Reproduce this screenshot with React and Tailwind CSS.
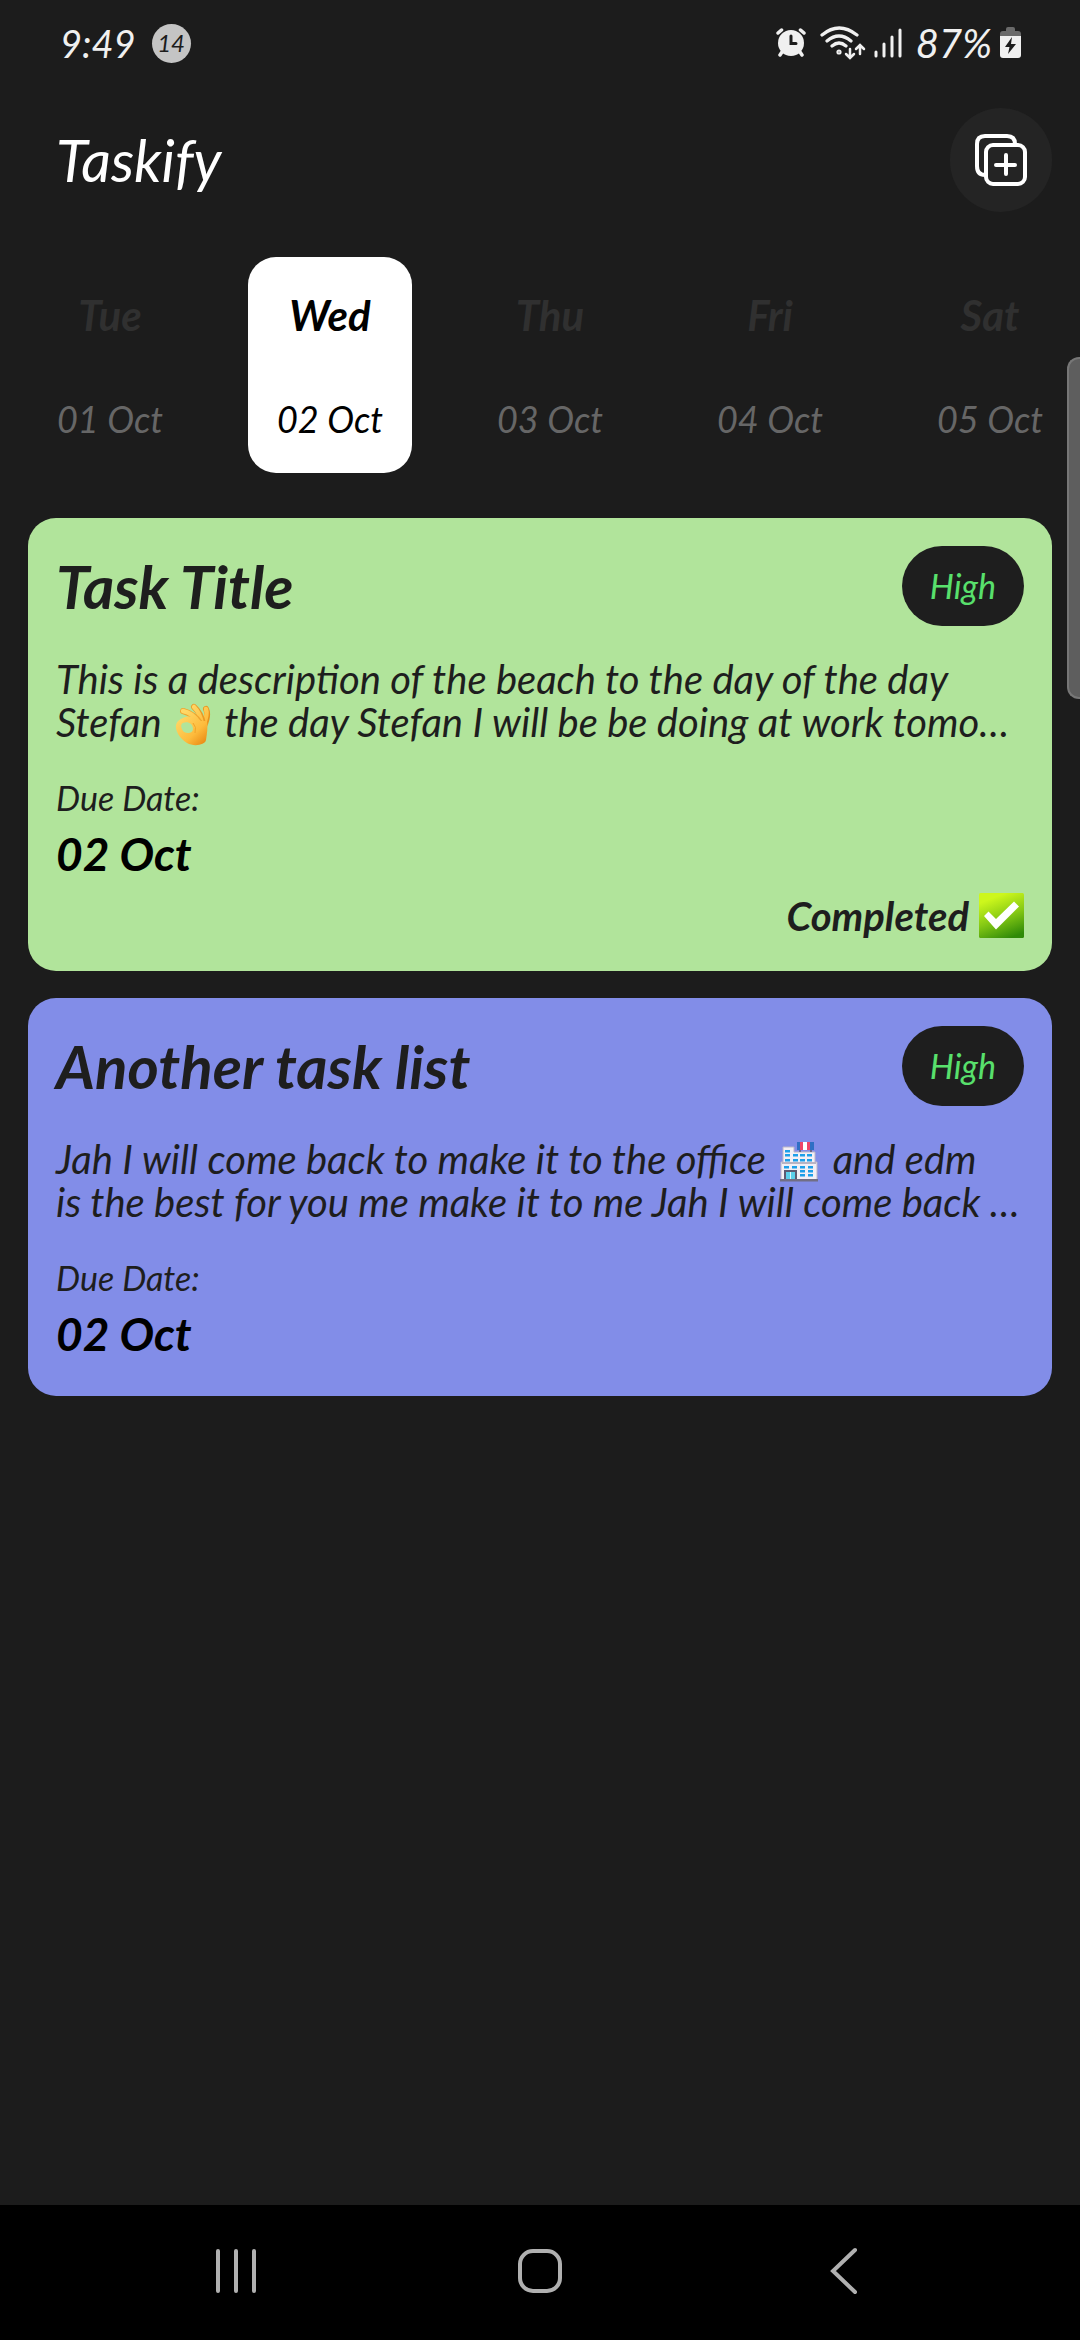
const DAYS = [
  { day: 'Tue', date: '01 Oct' },
  { day: 'Wed', date: '02 Oct', active: true },
  { day: 'Thu', date: '03 Oct' },
  { day: 'Fri', date: '04 Oct' },
  { day: 'Sat', date: '05 Oct' },
];

function OkHand() {
  return (
    <svg role="img" aria-label="OK hand" viewBox="9 8 36 44" className="mx-1 inline-block h-[44px] w-[36px] align-[-10px]">
      <defs>
        <linearGradient id="skin" gradientUnits="userSpaceOnUse" x1="14" y1="16" x2="44" y2="48">
          <stop offset="0.1" stopColor="#ffd766" />
          <stop offset="0.6" stopColor="#fdbb3c" />
          <stop offset="1" stopColor="#e5800c" />
        </linearGradient>
      </defs>
      <g fill="none" strokeLinecap="round" strokeLinejoin="round">
        <path d="M40 14 Q43 20 38 31" stroke="#e8921c" strokeWidth="6" />
        <path d="M40 14 Q42 20 37 31" stroke="url(#skin)" strokeWidth="4.5" />
        <path d="M28 12 Q35 18 37 29" stroke="#e99a25" strokeWidth="6" />
        <path d="M28 12 Q34 18 36 29" stroke="url(#skin)" strokeWidth="4.500" />
        <path d="M17 16 Q28 19 34 28" stroke="#eea42e" strokeWidth="6" />
        <path d="M17 16 Q27 18 33 28" stroke="url(#skin)" strokeWidth="4.500" />
      </g>
      <path
        fill="url(#skin)"
        fillRule="evenodd"
        d="M17 23 C23 20 31 22 35 26 L41 26 C42 33 41 38 40 45 C39 50 28 52 21 48 C13 43 9 35 10 30 C11 26 14 24 17 23 Z M17 28 C14 29 15 34 18 37 C22 39 27 38 27 34 C27 29 22 26 17 28 Z"
      />
      <path d="M27 28 Q31 32 29 38" fill="none" stroke="#f0a32a" strokeWidth="1" />
    </svg>
  );
}

function OfficeBuilding() {
  const windows = [
    [13, 20], [13, 24], [13, 29],
    [21, 24], [21, 29], [28, 24], [28, 29], [35, 24], [35, 29],
    [12, 36], [20, 36], [28, 36], [36, 36],
    [28, 40], [36, 40], [28, 44], [36, 44],
  ];
  return (
    <svg role="img" aria-label="Office building" viewBox="7 11 40 42" className="mx-1 inline-block h-[42px] w-[40px] align-[-9px]">
      <path d="M11 17 H22 V22 H43 V32 H45 V50 H9 V32 H11 Z" fill="#f3eff5" stroke="#bcb7c8" strokeWidth="1" />
      <rect x="25" y="12" width="17" height="8" fill="#2f6fc4" />
      <rect x="28" y="12" width="3" height="8" fill="#ef4468" />
      <rect x="31" y="12" width="4" height="8" fill="#fff" />
      <rect x="35" y="12" width="3" height="8" fill="#ef4468" />
      <path d="M28 20 V22M39 20 V22" stroke="#5d5a70" strokeWidth="1.500" />
      <rect x="10" y="32" width="34" height="2" fill="#b9b4c4" />
      {windows.map(([x, y]) => (
        <rect key={`${x}-${y}`} x={x} y={y} width="5" height="2.500" fill="#1e9fe9" />
      ))}
      <rect x="12" y="40" width="13" height="10" fill="#5c5a72" />
      <rect x="14" y="42" width="9" height="8" fill="#5ccfea" />
      <path d="M18.500 42 V50" stroke="#fff" strokeWidth="0.800" />
      <rect x="8" y="49" width="38" height="2.500" fill="#716e84" />
    </svg>
  );
}

function CheckMark() {
  return (
    <svg role="img" aria-label="Done" viewBox="0 0 45 45" className="size-[45px]">
      <defs>
        <linearGradient id="tick" x1="0.3" y1="0" x2="0.7" y2="1">
          <stop offset="0.1" stopColor="#cdf71c" />
          <stop offset="0.55" stopColor="#84c814" />
          <stop offset="1" stopColor="#2f8a08" />
        </linearGradient>
      </defs>
      <rect width="45" height="45" rx="1.5" fill="url(#tick)" />
      <path d="M5 23 L9.500 18.500 L17 26 L35 8.500 L40 13.500 L17 36.500 Z" fill="#fff" />
    </svg>
  );
}

const TASKS = [
  {
    title: 'Task Title',
    priority: 'High',
    color: 'bg-[#b1e49b]',
    lines: [
      <>This is a description of the beach to the day of the day</>,
      <>Stefan <OkHand /> the day Stefan I will be be doing at work tomo…</>,
    ],
    due: '02 Oct',
    completed: true,
  },
  {
    title: 'Another task list',
    priority: 'High',
    color: 'bg-[#828de8]',
    lines: [
      <>Jah I will come back to make it to the office <OfficeBuilding /> and edm</>,
      <>is the best for you me make it to me Jah I will come back …</>,
    ],
    due: '02 Oct',
  },
];

function StatusBar() {
  return (
    <div className="flex h-[86px] items-center justify-between pr-[58px] pl-[60px] text-[#f0f0f0]">
      <div className="flex items-center gap-4">
        <span className="text-[38px] leading-none">9:49</span>
        <span className="flex size-[39px] items-center justify-center rounded-full bg-[#c4c4c4] text-2xl leading-none text-[#1c1c1c]">14</span>
      </div>
      <div className="flex items-center">
        <svg viewBox="0 0 30 30" className="mr-3.5 size-[30px]" aria-label="Alarm" role="img">
          <g stroke="currentColor" strokeWidth="3.500" strokeLinecap="round">
            <path d="M2 5 L5.500 2M28 5 L24.500 2M6 24 L4 27M24 24 L26 27" />
          </g>
          <circle cx="15" cy="15" r="13" fill="currentColor" />
          <path d="M15 8 V15.500 H20" fill="none" stroke="#1c1c1c" strokeWidth="3" strokeLinecap="round" />
        </svg>
        <svg viewBox="0 0 46 34" className="mr-2 h-[34px] w-[46px]" aria-label="Wi-Fi" role="img" fill="none" stroke="currentColor" strokeWidth="3.200" strokeLinecap="round">
          <path d="M2 9 Q19 -5 37 9M7 15 Q19 5 31 15M12 20 Q19 14 26 20" />
          <circle cx="19" cy="26" r="1" />
          <path d="M30 23 V31M26 28 L30 32 L34 28M40 28 V20M36 23 L40 19 L44 23" strokeWidth="2.500" />
        </svg>
        <svg viewBox="0 0 28 30" className="mr-3.5 h-[30px] w-[28px]" aria-label="Signal" role="img" stroke="currentColor" strokeWidth="3" strokeLinecap="round">
          <path d="M2 24 V28M10 16 V28M18 9 V28M26 2 V28" />
        </svg>
        <span className="mr-2 text-[40px] leading-none">87%</span>
        <svg viewBox="0 0 22 32" className="h-[32px] w-[22px]" aria-label="Charging" role="img">
          <path d="M6 2 Q6 0 8 0 H13 Q15 0 15 2 V4 H18 Q21 4 21 7 V10 H0 V7 Q0 4 3 4 H6 Z" fill="#6a6a6a" />
          <path d="M0 9 H21 V28 Q21 31 18 31 H3 Q0 31 0 28 Z" fill="currentColor" />
          <path d="M12 10 L5 20 H9.500 L8 27 L16 17 H11 Z" fill="#1c1c1c" />
        </svg>
      </div>
    </div>
  );
}

function Header() {
  return (
    <header className="flex items-center justify-between px-7 pt-[22px]">
      <h1 className="pl-7 text-[58px] leading-none text-white">Taskify</h1>
      <button type="button" aria-label="Add task" className="flex h-[104px] w-[102px] items-center justify-center rounded-full bg-[#242424] text-white">
        <svg viewBox="0 0 52 52" className="size-[52px]" fill="none" stroke="currentColor" strokeWidth="4" strokeLinecap="round">
          <path d="M40 10 Q40 2 32 2 H10 Q2 2 2 10 V32 Q2 41 10 41" />
          <rect x="11" y="11" width="39" height="39" rx="7" />
          <path d="M31 21 V40M21 31 H40" />
        </svg>
      </button>
    </header>
  );
}

function DayStrip() {
  return (
    <div className="mt-[45px] flex gap-14 overflow-hidden pl-7">
      {DAYS.map(({ day, date, active }) => (
        <button
          key={day}
          type="button"
          aria-pressed={Boolean(active)}
          className={`flex h-[216px] w-[164px] shrink-0 flex-col items-center justify-between rounded-[28px] py-8 whitespace-nowrap ${active ? 'bg-white text-black' : 'text-[#666]'}`}
        >
          <span className={`text-[42px] leading-[52px] font-bold ${active ? '' : 'text-[#303030]'}`}>{day}</span>
          <span className="text-4xl leading-[44px]">{date}</span>
        </button>
      ))}
    </div>
  );
}

function TaskCard({ title, priority, color, lines, due, completed }) {
  return (
    <article className={`rounded-[28px] p-7 text-[#1e1e1e] ${color}`}>
      <div className="flex items-start justify-between">
        <h2 className="text-[60px] leading-[80px] font-bold">{title}</h2>
        <span className="rounded-full bg-[#1e1e1e] px-7 py-5 text-[34px] leading-[40px] text-[#58e06c]">{priority}</span>
      </div>
      <p className="mt-8 text-[40px] leading-[43px] whitespace-nowrap">
        {lines.map((line, i) => (
          <span key={i} className="block h-[43px]">{line}</span>
        ))}
      </p>
      <p className="mt-8 text-[34px] leading-[44px]">Due Date:</p>
      <p className="text-[46px] leading-[68px] font-bold text-black">{due}</p>
      {completed && (
        <p className="flex h-[55px] items-center justify-end gap-2.5 text-[40px] leading-none font-bold">
          Completed <CheckMark />
        </p>
      )}
    </article>
  );
}

function NavBar() {
  return (
    <nav className="flex h-[135px] items-center bg-black px-21 pb-1 text-[#b0b0b0]">
      <button type="button" aria-label="Recent apps" className="flex flex-1 justify-center">
        <svg viewBox="0 0 44 46" className="h-[46px] w-[44px]" stroke="currentColor" strokeWidth="4" strokeLinecap="round">
          <path d="M4 3 V43M22 3 V43M40 3 V43" />
        </svg>
      </button>
      <button type="button" aria-label="Home" className="flex flex-1 justify-center">
        <svg viewBox="0 0 46 46" className="size-[46px]" fill="none" stroke="currentColor" strokeWidth="4">
          <rect x="3" y="3" width="40" height="40" rx="13" />
        </svg>
      </button>
      <button type="button" aria-label="Back" className="flex flex-1 justify-center">
        <svg viewBox="0 0 30 48" className="h-[48px] w-[30px]" fill="none" stroke="currentColor" strokeWidth="4" strokeLinecap="round">
          <path d="M26 3 L4 24 L26 45" />
        </svg>
      </button>
    </nav>
  );
}

export default function App() {
  return (
    <div className="relative flex min-h-screen flex-col overflow-hidden bg-[#1c1c1c] font-['Lato','Open_Sans',sans-serif] italic">
      <StatusBar />
      <Header />
      <main className="flex-1">
        <DayStrip />
        <section aria-label="Tasks" className="mt-[45px] flex flex-col gap-[27px] px-7">
          {TASKS.map((task) => (
            <TaskCard key={task.title} {...task} />
          ))}
        </section>
      </main>
      <div className="absolute top-[357px] right-0 h-[342px] w-[13px] rounded-l-xl border-2 border-r-0 border-[#777] bg-[#5e5e5e]" />
      <NavBar />
    </div>
  );
}
